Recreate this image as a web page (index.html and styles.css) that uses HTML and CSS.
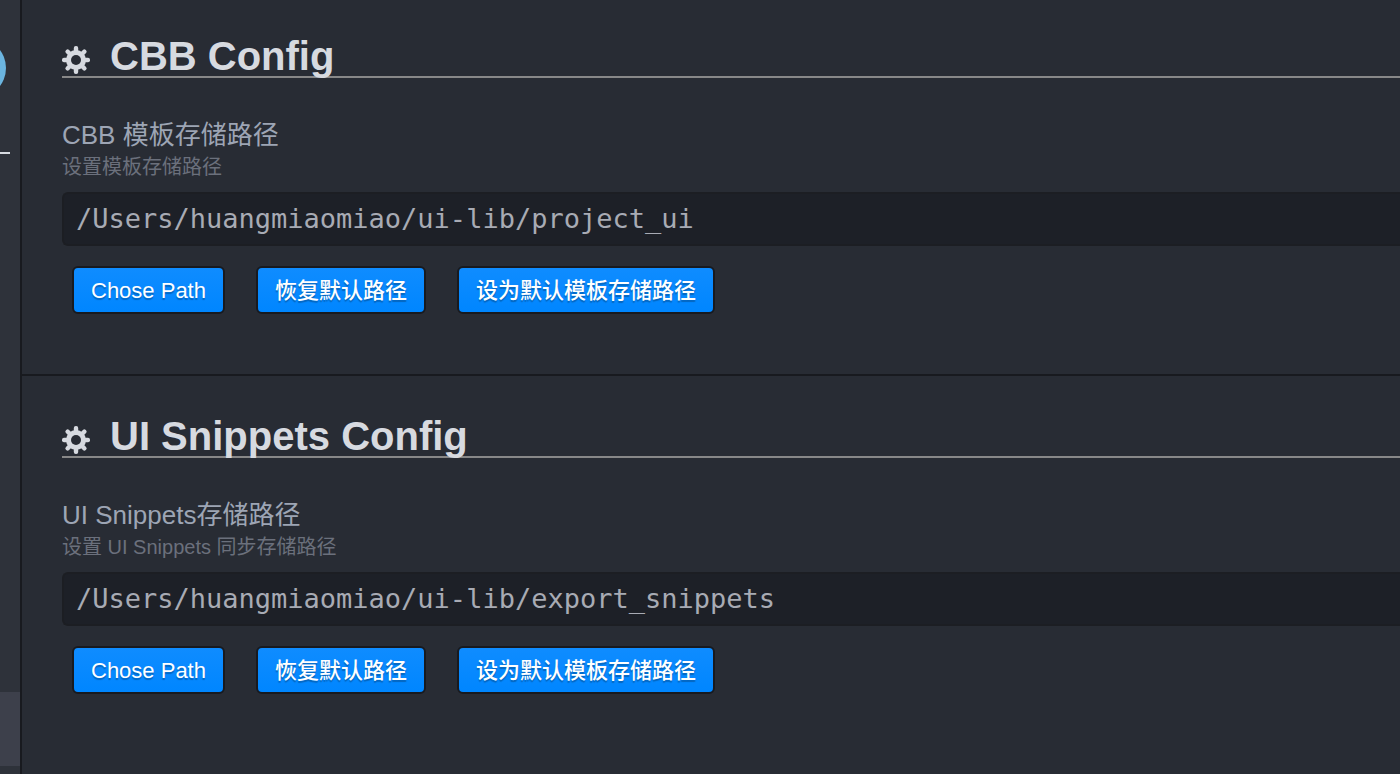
FILE: index.html
```html
<!DOCTYPE html>
<html lang="zh-CN">
<head>
<meta charset="utf-8">
<title>CBB Config</title>
<link rel="stylesheet" href="styles.css">
</head>
<body>
<svg class="sprite" aria-hidden="true">
  <symbol id="gear" viewBox="0 0 28 28">
    <g fill="currentColor">
      <rect x="11.8" y="0" width="4.4" height="28" rx="2"/>
      <rect x="11.8" y="0" width="4.4" height="28" rx="2" transform="rotate(45 14 14)"/>
      <rect x="11.8" y="0" width="4.4" height="28" rx="2" transform="rotate(90 14 14)"/>
      <rect x="11.8" y="0" width="4.4" height="28" rx="2" transform="rotate(135 14 14)"/>
      <circle cx="14" cy="14" r="10"/>
    </g>
    <circle class="gear-hole" cx="14" cy="14" r="5"/>
  </symbol>
</svg>
<div class="layout">
  <aside class="sidebar">
    <div class="avatar-box"><span class="avatar"></span></div>
    <div class="sidebar-active"></div>
  </aside>
  <main class="settings">
    <section class="section">
      <h1 class="heading"><svg class="gear"><use href="#gear"/></svg>CBB Config</h1>
      <label class="label" for="template-path">CBB 模板存储路径</label>
      <p class="description">设置模板存储路径</p>
      <input class="path" id="template-path" type="text" spellcheck="false" value="/Users/huangmiaomiao/ui-lib/project_ui">
      <div class="actions">
        <button class="btn" type="button">Chose Path</button>
        <button class="btn" type="button">恢复默认路径</button>
        <button class="btn" type="button">设为默认模板存储路径</button>
      </div>
    </section>
    <section class="section">
      <h1 class="heading"><svg class="gear"><use href="#gear"/></svg>UI Snippets Config</h1>
      <label class="label" for="snippet-path">UI Snippets存储路径</label>
      <p class="description">设置 UI Snippets 同步存储路径</p>
      <input class="path" id="snippet-path" type="text" spellcheck="false" value="/Users/huangmiaomiao/ui-lib/export_snippets">
      <div class="actions">
        <button class="btn" type="button">Chose Path</button>
        <button class="btn" type="button">恢复默认路径</button>
        <button class="btn" type="button">设为默认模板存储路径</button>
      </div>
    </section>
  </main>
</div>
</body>
</html>
```
FILE: styles.css
```css
* {
  box-sizing: border-box;
}

body {
  margin: 0;
  background: #282c34;
  color: #9da5b4;
  font-family: "Liberation Sans", "Noto Sans CJK SC", sans-serif;
}

.sprite {
  display: none;
}

.gear-hole {
  fill: #282c34;
}

.layout {
  display: flex;
  min-height: 100vh;
}

.sidebar {
  display: flex;
  flex-direction: column;
  flex: none;
  width: 22px;
  overflow: hidden;
  background: #2e323a;
  border-right: 2px solid #181a1f;
}

.avatar-box {
  display: flex;
  justify-content: flex-end;
  width: 10px;
  height: 154px;
  padding: 38px 4px 0 0;
  border-bottom: 2px solid #d7dae0;
}

.avatar {
  flex: none;
  width: 60px;
  height: 60px;
  border-radius: 50%;
  background: #6bb5e0;
}

.sidebar-active {
  height: 74px;
  margin: auto 0 8px;
  background: #3d404b;
}

.settings {
  flex: 1;
  min-width: 0;
}

.section {
  padding: 34px 0 60px 40px;
}

.section + .section {
  padding-top: 38px;
  border-top: 2px solid #181a1f;
}

.heading {
  display: flex;
  align-items: center;
  gap: 20px;
  height: 44px;
  margin: 0 0 40px;
  padding-top: 2px;
  border-bottom: 2px solid #888;
  color: #d7dae0;
  font-size: 40px;
  line-height: 46px;
}

.gear {
  flex: none;
  width: 28px;
  height: 28px;
  margin-top: 8px;
}

.label {
  display: block;
  font-size: 26px;
  line-height: 34px;
}

.description {
  margin: 0 0 10px;
  color: #6b707c;
  font-size: 20px;
  line-height: 30px;
}

.path {
  display: block;
  width: 100%;
  height: 54px;
  padding: 0 12px 2px;
  border: 2px solid #1c1e23;
  border-right: 0;
  border-radius: 6px 0 0 6px;
  outline: 0;
  background: #1d2027;
  color: #a8abb4;
  font-family: "DejaVu Sans Mono", monospace;
  font-size: 27px;
}

.actions {
  display: flex;
  flex-wrap: wrap;
  gap: 31px;
  padding: 20px 10px 0;
}

.btn {
  height: 48px;
  padding: 2px 17px 0;
  border: 2px solid #181a1f;
  border-radius: 6px;
  background: linear-gradient(#0f8cff, #0086ff);
  color: #fff;
  font-family: inherit;
  font-size: 22px;
  font-weight: 500;
  line-height: 26px;
  text-shadow: 0 2px 1px rgba(0, 0, 0, 0.25);
}
```
